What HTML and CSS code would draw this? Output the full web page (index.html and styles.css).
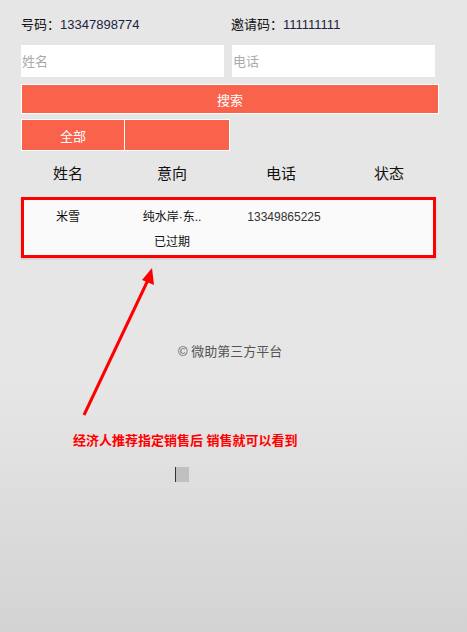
FILE: index.html
```html
<!DOCTYPE html>
<html>
<head>
    <title>客户列表</title>
    <link rel="stylesheet" href="styles.css">
</head>
<body>
    <div class="page">
        <div class="info">
            <span class="info-item">号码：<b class="num">13347898774</b></span>
            <span class="info-item">邀请码：<b class="num">111111111</b></span>
        </div>

        <div class="search-row">
            <input type="text" class="field" placeholder="姓名">
            <input type="text" class="field" placeholder="电话">
        </div>
        <button type="button" class="btn-search">搜索</button>

        <div class="tabs">
            <button type="button" class="tab">全部</button>
            <button type="button" class="tab"></button>
        </div>

        <div class="list-head">
            <span>姓名</span>
            <span>意向</span>
            <span>电话</span>
            <span>状态</span>
        </div>

        <div class="card">
            <div class="card-row">
                <span>米雪</span>
                <span>纯水岸·东..</span>
                <span class="phone">13349865225</span>
                <span></span>
            </div>
            <div class="card-row">
                <span></span>
                <span>已过期</span>
                <span></span>
                <span></span>
            </div>
        </div>

        <p class="footer">© 微助第三方平台</p>
        <div class="cursor-box"></div>
    </div>

    <!-- annotation -->
    <svg class="arrow" width="467" height="632" viewBox="0 0 467 632">
        <line x1="84" y1="415" x2="148" y2="280" stroke="#ff0000" stroke-width="3"/>
        <polygon points="152,268 154,285 142,280" fill="#ff0000"/>
    </svg>
    <p class="note">经济人推荐指定销售后 销售就可以看到</p>
</body>
</html>
```

FILE: styles.css
```css
body {
    margin: 0;
    min-height: 632px;
    font-family: "Liberation Sans", "Noto Sans CJK SC", sans-serif;
    color: #111;
    background: linear-gradient(#e6e6e6 0, #e6e6e6 385px, #d3d3d3 632px);
    position: relative;
}
.page {
    padding: 16px 0 0 21px;
}
.info {
    display: flex;
    font-size: 13px;
    line-height: 17px;
}
.info-item {
    width: 210px;
}
.num {
    font-weight: normal;
    color: #1b2340;
}
.search-row {
    display: flex;
    gap: 8px;
    margin-top: 12px;
}
.field {
    width: 203px;
    height: 32px;
    border: 0;
    padding: 0 1px;
    box-sizing: border-box;
    font-family: inherit;
    font-size: 13px;
    background: #fff;
    outline: none;
}
.field::placeholder {
    color: #aaa;
}
.btn-search,
.tab {
    background-color: #f9634c;
    border: 1px solid #fff;
    color: #fff;
    font-family: inherit;
    font-size: 13px;
    box-sizing: border-box;
    padding: 0;
    cursor: pointer;
}
.btn-search {
    display: block;
    width: 418px;
    height: 30px;
    margin-top: 7px;
}
.tabs {
    display: flex;
    margin-top: 5px;
}
.tab {
    width: 104px;
    height: 32px;
}
.tab + .tab {
    width: 105px;
    border-left: 0;
}
.list-head {
    display: grid;
    grid-template-columns: 104px 104px 114px 102px;
    margin: 13px 0 0 -5px;
    font-size: 15px;
    line-height: 20px;
    text-align: center;
}
.card {
    width: 415px;
    height: 61px;
    box-sizing: border-box;
    margin-top: 13px;
    border: 3px solid #ff0000;
    background: #fafafa;
    box-shadow: 0 1px 2px rgba(0, 0, 0, 0.15);
    padding-top: 9px;
    font-size: 12px;
}
.card-row {
    display: grid;
    grid-template-columns: 88px 120px 104px 1fr;
    line-height: 16px;
    text-align: center;
    margin-bottom: 9px;
}
.phone {
    color: #333;
}
.footer {
    margin: 87px 0 0 157px;
    font-size: 13px;
    line-height: 14px;
    color: #555;
}
.cursor-box {
    width: 13px;
    height: 15px;
    margin: 108px 0 0 154px;
    background: #c0c0c0;
    border-left: 1px solid #333;
}
.arrow {
    position: absolute;
    left: 0;
    top: 0;
    pointer-events: none;
}
.note {
    position: absolute;
    left: 73px;
    top: 433px;
    margin: 0;
    font-size: 13px;
    line-height: 16px;
    font-weight: bold;
    color: #ff0000;
}
```
